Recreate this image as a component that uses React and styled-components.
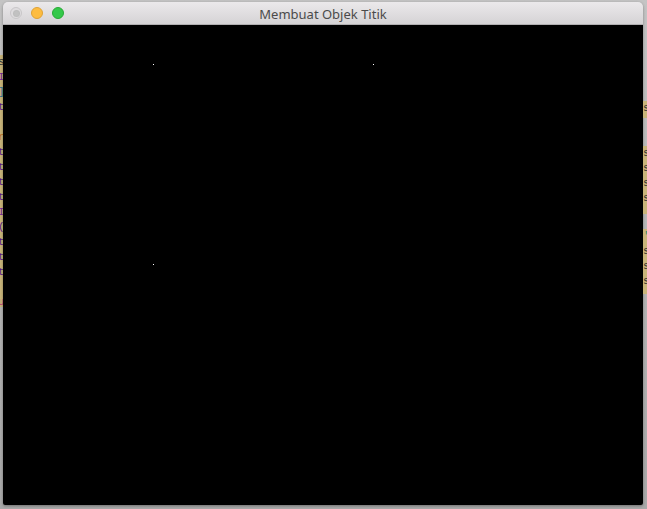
import React from 'react';
import styled, { createGlobalStyle } from 'styled-components';

const GlobalStyle = createGlobalStyle`
    html, body {
        margin: 0;
        padding: 0;
        width: 647px;
        height: 509px;
        overflow: hidden;
        background: #b4b4b4;
        font-family: 'Liberation Sans', Arial, sans-serif;
    }
`;

const Desktop = styled.div`
    display: flex;
    width: 647px;
    height: 509px;
    background: linear-gradient(#c4c4c4, #a9a9a9);
`;

const EdgeStrip = styled.div`
    width: ${props => props.width}px;
    display: flex;
    flex-direction: column;
    padding-top: ${props => props.top}px;
    overflow: hidden;
`;

const Highlight = styled.div`
    height: ${props => props.height}px;
    margin-top: ${props => props.gap || 0}px;
    background: ${props => props.color || '#c9b57a'};
    display: flex;
    flex-direction: column;
    overflow: hidden;
`;

const Glyph = styled.span`
    display: block;
    height: 15px;
    font-family: 'Liberation Mono', monospace;
    font-size: 11px;
    line-height: 15px;
    color: ${props => props.color || '#5a1a8a'};
    margin-left: ${props => props.shift || 0}px;
`;

const Window = styled.div`
    width: 640px;
    margin-top: 2px;
    height: 503px;
    display: flex;
    flex-direction: column;
    border-radius: 5px 5px 2px 2px;
    overflow: hidden;
    box-shadow: 0 1px 3px rgba(0, 0, 0, 0.35);
`;

const TitleBar = styled.div`
    position: relative;
    height: 23px;
    display: flex;
    align-items: center;
    justify-content: center;
    background: linear-gradient(#ebe9eb, #d5d3d5);
    border-bottom: 1px solid #b1afb1;
    box-sizing: border-box;
`;

const Lights = styled.div`
    position: absolute;
    left: 7px;
    top: 5px;
    display: flex;
    gap: 9px;
`;

const Light = styled.div`
    width: 12px;
    height: 12px;
    border-radius: 50%;
    box-sizing: border-box;
    background: ${props => props.color};
    border: 1px solid ${props => props.border};
    display: flex;
    align-items: center;
    justify-content: center;
`;

const CloseDot = styled.div`
    width: 5px;
    height: 5px;
    border-radius: 50%;
    background: #c1c1c1;
    box-shadow: 0 0 0 1px #bdbdbd;
`;

const Title = styled.span`
    font-family: 'Noto Sans', 'Liberation Sans', sans-serif;
    font-size: 13px;
    color: #4b4b4b;
    margin-top: 1px;
`;

const Canvas = styled.div`
    position: relative;
    flex: 1;
    background: #000;
`;

const Point = styled.div`
    position: absolute;
    width: 1px;
    height: 1px;
    background: #fff;
`;

const points = [
    { x: 150, y: 39 },
    { x: 370, y: 39 },
    { x: 150, y: 239 },
];

const leftGlyphs = [
    { c: 's', color: '#333' },
    { c: 'I', color: '#7a2a9a' },
    { c: ']', color: '#2a6a9a' },
    { c: 't', color: '#5a1a8a' },
    { c: '', color: '#5a1a8a' },
    { c: 'r', color: '#c07020' },
    { c: 't', color: '#5a1a8a' },
    { c: 't', color: '#5a1a8a' },
    { c: 't', color: '#5a1a8a' },
    { c: 't', color: '#5a1a8a' },
    { c: 'I', color: '#7a2a9a' },
    { c: '(', color: '#5a1a8a' },
    { c: 't', color: '#5a1a8a' },
    { c: 't', color: '#5a1a8a' },
    { c: 't', color: '#5a1a8a' },
    { c: '', color: '#5a1a8a' },
    { c: 'u', color: '#c0307a' },
];

class App extends React.Component {
    render() {
        return (
            <Desktop>
                <GlobalStyle />
                <EdgeStrip width={3} top={55}>
                    <Highlight height={252}>
                        {leftGlyphs.map((g, i) => (
                            <Glyph key={i} color={g.color} shift={-2}>{g.c || '\u00a0'}</Glyph>
                        ))}
                    </Highlight>
                </EdgeStrip>
                <Window>
                    <TitleBar>
                        <Lights>
                            <Light color="#dedcde" border="#c8c6c8"><CloseDot /></Light>
                            <Light color="#fdbc40" border="#dea236" />
                            <Light color="#34c84a" border="#27aa35" />
                        </Lights>
                        <Title>Membuat Objek Titik</Title>
                    </TitleBar>
                    <Canvas>
                        {points.map((p, i) => (
                            <Point key={i} style={{ left: p.x, top: p.y }} />
                        ))}
                    </Canvas>
                </Window>
                <EdgeStrip width={4} top={101}>
                    <Highlight height={17}>
                        <Glyph color="#333">s</Glyph>
                    </Highlight>
                    <Highlight height={68} gap={28}>
                        <Glyph color="#333">s</Glyph>
                        <Glyph color="#333">s</Glyph>
                        <Glyph color="#333">s</Glyph>
                        <Glyph color="#333">s</Glyph>
                    </Highlight>
                    <Highlight height={65} gap={15}>
                        <Glyph color="#3a8a6a">'</Glyph>
                        <Glyph color="#333">s</Glyph>
                        <Glyph color="#333">s</Glyph>
                        <Glyph color="#333">s</Glyph>
                    </Highlight>
                </EdgeStrip>
            </Desktop>
        );
    }
}

export default App;
